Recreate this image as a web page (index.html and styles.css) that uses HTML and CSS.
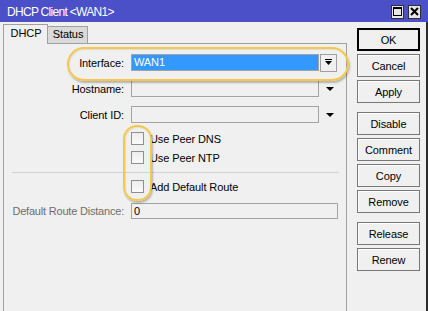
FILE: index.html
```html
<!DOCTYPE html>
<html>
<head>
<meta charset="utf-8">
<link rel="stylesheet" href="styles.css">
</head>
<body>
<div class="window">
  <div class="titlebar">
    <span class="title">DHCP Client &lt;WAN1&gt;</span>
    <div class="tbtns">
      <span class="tbtn"><svg width="9" height="9" viewBox="0 0 9 9"><rect x="0.5" y="0.5" width="8" height="8" fill="none" stroke="#000"/><rect x="0" y="0" width="9" height="2" fill="#000"/></svg></span>
      <span class="tbtn"><svg width="9" height="9" viewBox="0 0 9 9"><path d="M1 1 L8 8 M8 1 L1 8" stroke="#000" stroke-width="2"/></svg></span>
    </div>
  </div>
  <div class="body">
    <div class="main">
      <div class="tabs">
        <div class="tab active">DHCP</div>
        <div class="tab">Status</div>
      </div>
      <div class="panel">
        <div class="row r-first">
          <span class="lbl">Interface:</span>
          <div class="field sel">WAN1</div>
          <div class="ddbtn"><svg width="7" height="7" viewBox="0 0 7 7"><rect x="0" y="0" width="7" height="1" fill="#000"/><polygon points="0,2 7,2 3.5,6" fill="#000"/></svg></div>
        </div>
        <div class="row">
          <span class="lbl">Hostname:</span>
          <div class="field"></div>
          <div class="ddarrow"><svg width="8" height="4" viewBox="0 0 8 4"><polygon points="0,0 8,0 4,4" fill="#000"/></svg></div>
        </div>
        <div class="row">
          <span class="lbl">Client ID:</span>
          <div class="field"></div>
          <div class="ddarrow"><svg width="8" height="4" viewBox="0 0 8 4"><polygon points="0,0 8,0 4,4" fill="#000"/></svg></div>
        </div>
        <div class="checks">
          <div class="crow c-first"><span class="cbox"></span><span>Use Peer DNS</span></div>
          <div class="crow"><span class="cbox"></span><span>Use Peer NTP</span></div>
        </div>
        <div class="sep"></div>
        <div class="checks">
          <div class="crow"><span class="cbox"></span><span>Add Default Route</span></div>
        </div>
        <div class="row r-drd">
          <span class="lbl dis">Default Route Distance:</span>
          <div class="field wide">0</div>
        </div>
      </div>
    </div>
    <div class="side">
      <div class="btn ok">OK</div>
      <div class="btn">Cancel</div>
      <div class="btn">Apply</div>
      <div class="btn grp">Disable</div>
      <div class="btn">Comment</div>
      <div class="btn">Copy</div>
      <div class="btn">Remove</div>
      <div class="btn grp">Release</div>
      <div class="btn">Renew</div>
    </div>
  </div>
  <div class="hl hl1"></div>
  <div class="hl hl2"></div>
</div>
</body>
</html>
```
FILE: styles.css
```css
* { box-sizing: border-box; }
body {
  margin: 0;
  font-family: "Liberation Sans", Arial, sans-serif;
  font-size: 11px;
  color: #000;
  background: #f0f0f0;
}
.window {
  position: relative;
  width: 428px;
  height: 311px;
  background: #f0f0f0;
  overflow: hidden;
  display: flex;
  flex-direction: column;
}
.titlebar {
  height: 22px;
  flex: none;
  background: #4b4fc8;
  color: #fff;
  display: flex;
  align-items: center;
  padding-left: 7px;
  font-size: 12px;
  letter-spacing: -0.7px;
}
.title { padding-top: 1px; }
.tbtns {
  margin-left: auto;
  display: flex;
  gap: 4px;
  padding-right: 7px;
  padding-top: 1px;
}
.tbtn {
  width: 13px;
  height: 14px;
  background: #e6e6e6;
  border: 1px solid #303030;
  display: flex;
  align-items: center;
  justify-content: center;
}
.body {
  flex: 1;
  display: flex;
  border-right: 2px solid #2a2a2a;
}
.main {
  width: 347px;
  padding-left: 3px;
  display: flex;
  flex-direction: column;
  letter-spacing: -0.1px;
}
.tabs {
  height: 21px;
  display: flex;
  align-items: flex-end;
}
.tab {
  height: 17px;
  width: 40px;
  border: 1px solid #a0a0a0;
  border-left: none;
  border-bottom: none;
  background: #dadada;
  text-align: center;
  line-height: 15px;
  padding-left: 1px;
}
.tab.active {
  height: 20px;
  width: 45px;
  border-left: 1px solid #a0a0a0;
  background: #f0f0f0;
  margin-bottom: -1px;
  position: relative;
  z-index: 1;
  line-height: 17px;
}
.panel {
  flex: 1;
  border: 1px solid #a0a0a0;
  border-bottom: none;
  display: flex;
  flex-direction: column;
}
.row {
  display: flex;
  align-items: center;
  height: 17px;
  margin-top: 9px;
}
.row.r-first { margin-top: 10px; }
.lbl {
  width: 120px;
  text-align: right;
  margin-right: 7px;
  white-space: nowrap;
}
.lbl.dis { color: #6d6d6d; letter-spacing: -0.2px; }
.field {
  width: 188px;
  height: 17px;
  border: 1px solid #a3a3a3;
  background: #f0f0f0;
  padding-left: 2px;
  line-height: 15px;
}
.field.sel {
  background: #3399ff;
  color: #fff;
}
.field.wide {
  width: 207px;
  height: 16px;
  line-height: 14px;
}
.ddbtn {
  width: 17px;
  height: 18px;
  margin-left: 1px;
  border: 1px solid #a0a0a0;
  display: flex;
  align-items: center;
  justify-content: center;
}
.ddarrow {
  width: 19px;
  display: flex;
  justify-content: center;
  padding-left: 2px;
}
.checks {
  display: flex;
  flex-direction: column;
  padding-left: 127px;
}
.crow {
  height: 19px;
  display: flex;
  align-items: center;
  gap: 6px;
}
.crow.c-first { margin-top: 6px; }
.cbox {
  width: 13px;
  height: 13px;
  border: 1px solid #8f8f8f;
  background: linear-gradient(#ededed, #fafafa);
}
.sep {
  margin: 5px 7px 4px 8px;
  border-top: 1px solid #d2d2d2;
}
.row.r-drd { margin-top: 7px; height: 16px; }
.side {
  width: 79px;
  padding-top: 6px;
  padding-left: 10px;
  display: flex;
  flex-direction: column;
}
.btn {
  width: 63px;
  height: 23px;
  margin-bottom: 3px;
  border: 1px solid #777;
  box-shadow: inset 1px 1px #fff;
  background: #f0f0f0;
  display: flex;
  align-items: center;
  justify-content: center;
  letter-spacing: -0.1px;
}
.btn.ok {
  border: 2px solid #000;
  box-shadow: none;
}
.btn.grp { margin-top: 6px; }
.hl {
  position: absolute;
  border: 2px solid #f6c84a;
  box-shadow: 1px 2px 2px rgba(0,0,0,0.25), inset 1px 1px 1px rgba(0,0,0,0.08);
}
.hl1 {
  left: 67px;
  top: 47px;
  width: 282px;
  height: 34px;
  border-radius: 17px;
}
.hl2 {
  left: 123px;
  top: 125px;
  width: 29px;
  height: 76px;
  border-radius: 14px;
}
```
